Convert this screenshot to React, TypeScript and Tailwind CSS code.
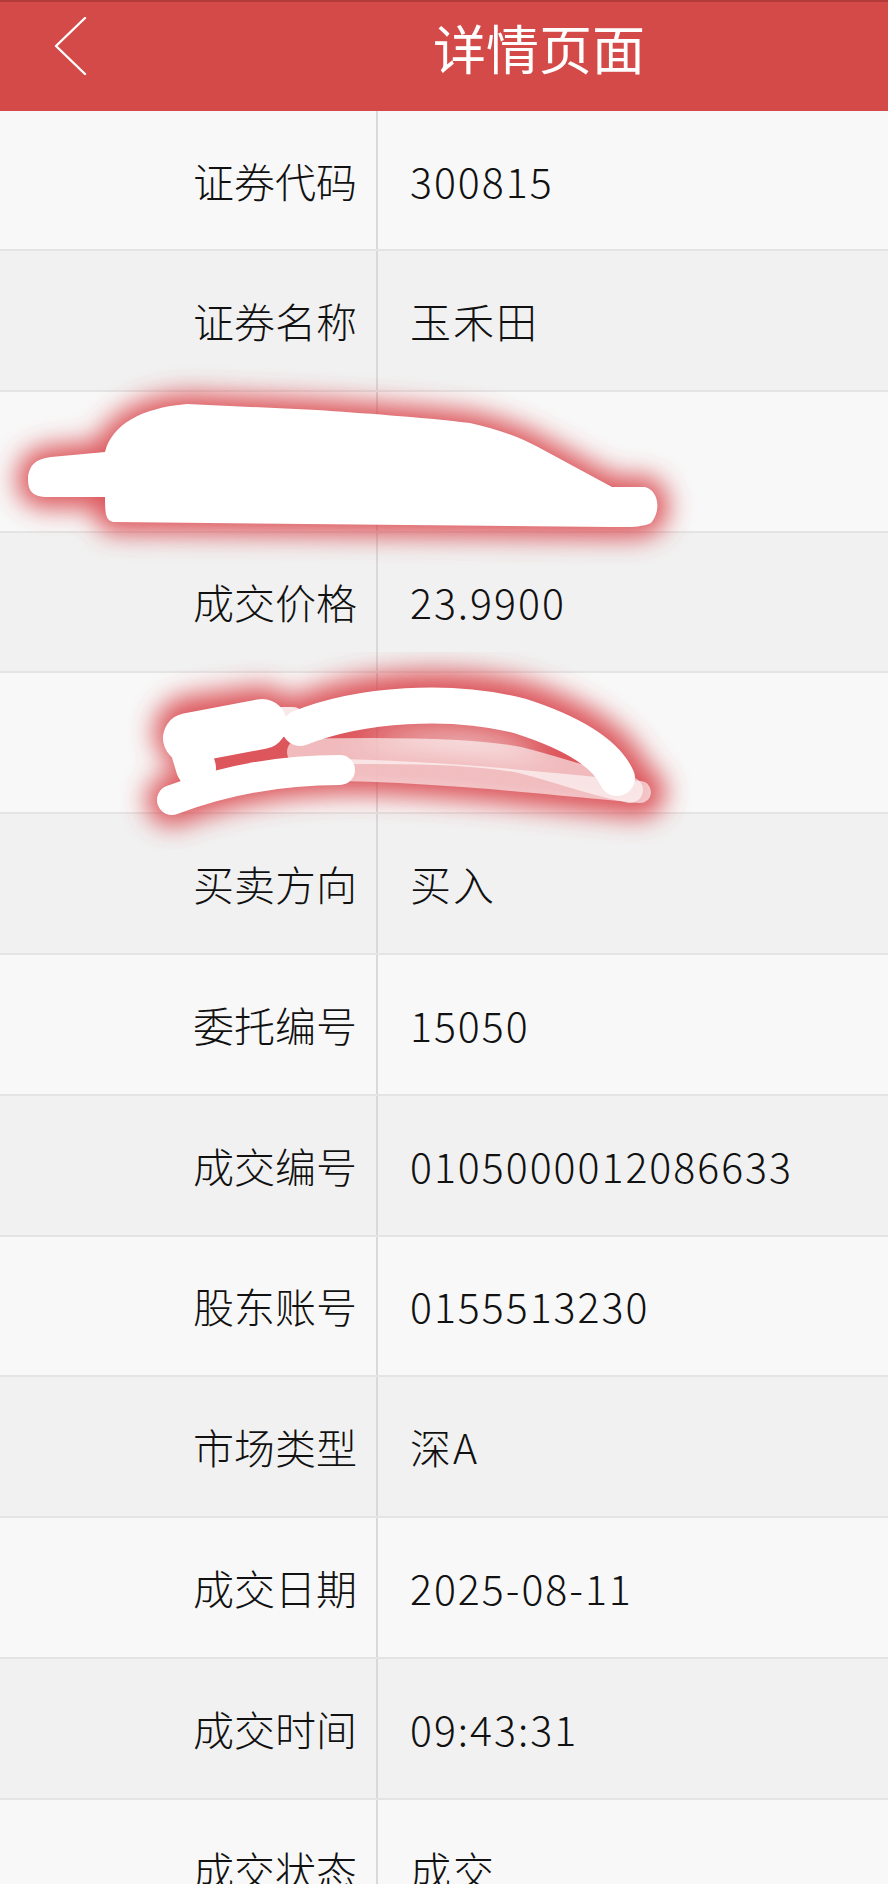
const ROWS: { label: string; value: string }[] = [
  { label: "证券代码", value: "300815" },
  { label: "证券名称", value: "玉禾田" },
  { label: "", value: "" },
  { label: "成交价格", value: "23.9900" },
  { label: "", value: "" },
  { label: "买卖方向", value: "买入" },
  { label: "委托编号", value: "15050" },
  { label: "成交编号", value: "0105000012086633" },
  { label: "股东账号", value: "0155513230" },
  { label: "市场类型", value: "深A" },
  { label: "成交日期", value: "2025-08-11" },
  { label: "成交时间", value: "09:43:31" },
  { label: "成交状态", value: "成交" },
];

function BackIcon() {
  return (
    <svg width="40" height="64" viewBox="0 0 40 64" fill="none" className="shrink-0">
      <path d="M31 1 L2 29 L31 57" stroke="#fff" strokeWidth="2.4" strokeLinecap="round" strokeLinejoin="round" />
    </svg>
  );
}

// redaction scribbles drawn over the table
function Scribbles() {
  const blob1 =
    "M105 452 C112 425 140 408 187 404 L317 410 C360 413 420 417 470 423 C500 430 520 437 538 447 L612 487 L645 487 C658 490 662 510 651 523 C640 528 625 527 612 527 L113 522 C106 520 105 515 105 497 L45 497 C30 496 28 488 28 478 C29 466 35 459 51 457 Z";
  return (
    <svg
      width="888"
      height="1884"
      viewBox="0 0 888 1884"
      className="pointer-events-none absolute left-0 top-0"
    >
      <defs>
        <filter id="glow" x="-20%" y="-50%" width="140%" height="200%">
          <feGaussianBlur stdDeviation="13" />
        </filter>
      </defs>

      {/* first scribble */}
      <path d={blob1} fill="#d9444c" stroke="#d9444c" strokeWidth="22" filter="url(#glow)" opacity="0.9" />
      <path d={blob1} fill="#fff" />

      {/* second scribble */}
      <g filter="url(#glow)" opacity="0.9" stroke="#d9444c" strokeLinecap="round" fill="none">
        <path d="M190 732 L262 722" strokeWidth="72" />
        <path d="M300 728 C360 700 450 694 520 712 C570 728 608 752 620 778" strokeWidth="62" />
        <path d="M172 800 C230 776 300 768 360 768 C450 770 560 785 640 792" strokeWidth="52" />
      </g>
      <g stroke="#fff" strokeLinecap="round" fill="none">
        <path d="M300 752 C380 750 470 750 520 760 C560 770 590 782 630 790" strokeWidth="26" opacity="0.6" />
        <path d="M188 738 L262 724" strokeWidth="50" />
        <path d="M240 722 L292 722" strokeWidth="30" opacity="0.85" />
        <path d="M190 748 L196 768" strokeWidth="40" />
        <path d="M300 728 C360 704 450 698 520 716 C570 732 605 752 617 778" strokeWidth="36" />
        <path d="M172 800 C230 778 290 770 340 770" strokeWidth="30" />
        <path d="M340 770 C450 772 560 785 640 792" strokeWidth="22" opacity="0.6" />
      </g>
    </svg>
  );
}

export default function App() {
  return (
    <div
      className="relative w-[888px] h-[1884px] overflow-hidden bg-[#f8f8f8] text-[#111]"
      style={{ fontFamily: '"Noto Sans CJK SC", "Noto Sans", sans-serif' }}
    >
      <header className="flex h-[111px] items-start border-t-2 border-[#b23a38] bg-[#d44a48]">
        <div className="ml-[54px] mt-[15px]">
          <BackIcon />
        </div>
        <h1 className="ml-[339px] mt-[19px] text-[53px] leading-[53px] font-normal text-white">详情页面</h1>
      </header>

      <main className="flex flex-col">
        {ROWS.map((row, i) => (
          <div
            key={i}
            className={
              "flex shrink-0 border-b-2 border-[#e4e4e4] " +
              (i === 0 ? "h-[140px] " : "h-[140.8px] ") +
              (i % 2 === 0 ? "bg-[#f8f8f8]" : "bg-[#f1f1f1]")
            }
          >
            <div className="flex w-[378px] shrink-0 items-center justify-end border-r-2 border-[#d9d9d9] pr-[19px] text-[41px] font-light leading-none">
              {row.label}
            </div>
            <div className="flex items-center pl-[32px] text-[41px] font-light leading-none tracking-[2px]">
              {row.value}
            </div>
          </div>
        ))}
      </main>

      <Scribbles />
    </div>
  );
}
